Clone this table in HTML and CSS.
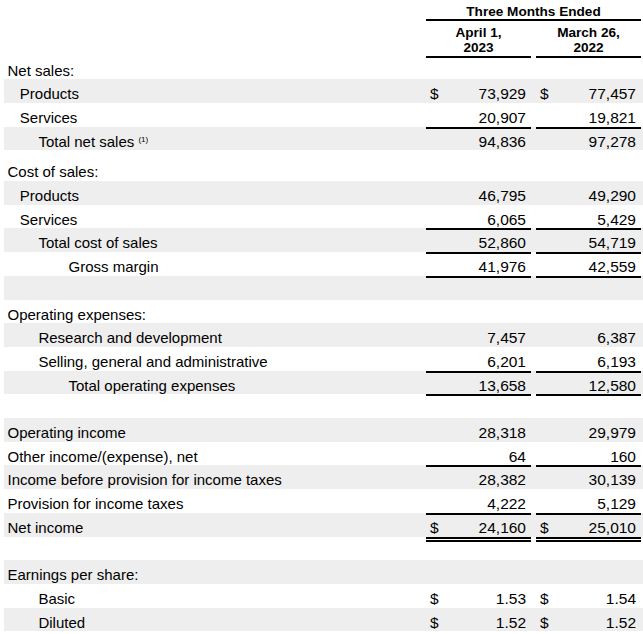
FILE: index.html
```html
<!DOCTYPE html>
<html lang="en">
<head>
<meta charset="utf-8">
<title>Condensed Consolidated Statements of Operations</title>
<link rel="stylesheet" href="styles.css">
</head>
<body>
<table class="stmt">
  <colgroup>
    <col class="c-label">
    <col class="c-per">
    <col class="c-sp">
    <col class="c-per">
    <col class="c-tail">
  </colgroup>
  <thead>
    <tr class="h1">
      <th></th>
      <th colspan="3" class="h-span">Three Months Ended</th>
      <th></th>
    </tr>
    <tr class="h2">
      <th></th>
      <th class="h-per"><div class="hl">April 1,</div><div class="hl">2023</div></th>
      <th></th>
      <th class="h-per"><div class="hl">March 26,</div><div class="hl">2022</div></th>
      <th></th>
    </tr>
  </thead>
  <tbody>
    <tr class="first">
      <td class="lbl l0">Net sales:</td><td></td><td></td><td></td><td></td>
    </tr>
    <tr class="sh">
      <td class="lbl l1">Products</td>
      <td class="amt"><div class="v"><span class="cur">$</span><span class="num">73,929</span></div></td>
      <td></td>
      <td class="amt"><div class="v"><span class="cur">$</span><span class="num">77,457</span></div></td>
      <td></td>
    </tr>
    <tr>
      <td class="lbl l1">Services</td>
      <td class="amt"><div class="v"><span class="num">20,907</span></div></td>
      <td></td>
      <td class="amt"><div class="v"><span class="num">19,821</span></div></td>
      <td></td>
    </tr>
    <tr class="sh">
      <td class="lbl l2">Total net sales <sup class="fn">(1)</sup></td>
      <td class="amt ol"><div class="v"><span class="num">94,836</span></div></td>
      <td></td>
      <td class="amt ol"><div class="v"><span class="num">97,278</span></div></td>
      <td></td>
    </tr>
    <tr class="gap"><td></td><td></td><td></td><td></td><td></td></tr>
    <tr>
      <td class="lbl l0">Cost of sales:</td><td></td><td></td><td></td><td></td>
    </tr>
    <tr class="sh">
      <td class="lbl l1">Products</td>
      <td class="amt"><div class="v"><span class="num">46,795</span></div></td>
      <td></td>
      <td class="amt"><div class="v"><span class="num">49,290</span></div></td>
      <td></td>
    </tr>
    <tr>
      <td class="lbl l1">Services</td>
      <td class="amt"><div class="v"><span class="num">6,065</span></div></td>
      <td></td>
      <td class="amt"><div class="v"><span class="num">5,429</span></div></td>
      <td></td>
    </tr>
    <tr class="sh">
      <td class="lbl l2">Total cost of sales</td>
      <td class="amt ol"><div class="v"><span class="num">52,860</span></div></td>
      <td></td>
      <td class="amt ol"><div class="v"><span class="num">54,719</span></div></td>
      <td></td>
    </tr>
    <tr>
      <td class="lbl l3">Gross margin</td>
      <td class="amt ol"><div class="v"><span class="num">41,976</span></div></td>
      <td></td>
      <td class="amt ol"><div class="v"><span class="num">42,559</span></div></td>
      <td></td>
    </tr>
    <tr class="sh">
      <td class="lbl"></td><td class="amt ol"></td><td></td><td class="amt ol"></td><td></td>
    </tr>
    <tr>
      <td class="lbl l0">Operating expenses:</td><td></td><td></td><td></td><td></td>
    </tr>
    <tr class="sh">
      <td class="lbl l2">Research and development</td>
      <td class="amt"><div class="v"><span class="num">7,457</span></div></td>
      <td></td>
      <td class="amt"><div class="v"><span class="num">6,387</span></div></td>
      <td></td>
    </tr>
    <tr>
      <td class="lbl l2">Selling, general and administrative</td>
      <td class="amt"><div class="v"><span class="num">6,201</span></div></td>
      <td></td>
      <td class="amt"><div class="v"><span class="num">6,193</span></div></td>
      <td></td>
    </tr>
    <tr class="sh">
      <td class="lbl l3">Total operating expenses</td>
      <td class="amt ol"><div class="v"><span class="num">13,658</span></div></td>
      <td></td>
      <td class="amt ol"><div class="v"><span class="num">12,580</span></div></td>
      <td></td>
    </tr>
    <tr>
      <td class="lbl"></td><td class="amt ol"></td><td></td><td class="amt ol"></td><td></td>
    </tr>
    <tr class="sh">
      <td class="lbl l0">Operating income</td>
      <td class="amt"><div class="v"><span class="num">28,318</span></div></td>
      <td></td>
      <td class="amt"><div class="v"><span class="num">29,979</span></div></td>
      <td></td>
    </tr>
    <tr>
      <td class="lbl l0">Other income/(expense), net</td>
      <td class="amt"><div class="v"><span class="num">64</span></div></td>
      <td></td>
      <td class="amt"><div class="v"><span class="num">160</span></div></td>
      <td></td>
    </tr>
    <tr class="sh">
      <td class="lbl l0">Income before provision for income taxes</td>
      <td class="amt ol"><div class="v"><span class="num">28,382</span></div></td>
      <td></td>
      <td class="amt ol"><div class="v"><span class="num">30,139</span></div></td>
      <td></td>
    </tr>
    <tr>
      <td class="lbl l0">Provision for income taxes</td>
      <td class="amt"><div class="v"><span class="num">4,222</span></div></td>
      <td></td>
      <td class="amt"><div class="v"><span class="num">5,129</span></div></td>
      <td></td>
    </tr>
    <tr class="sh">
      <td class="lbl l0">Net income</td>
      <td class="amt ol"><div class="v"><span class="cur">$</span><span class="num">24,160</span></div></td>
      <td></td>
      <td class="amt ol"><div class="v"><span class="cur">$</span><span class="num">25,010</span></div></td>
      <td></td>
    </tr>
    <tr>
      <td class="lbl"></td><td class="amt dbl"></td><td></td><td class="amt dbl"></td><td></td>
    </tr>
    <tr class="sh">
      <td class="lbl l0">Earnings per share:</td><td></td><td></td><td></td><td></td>
    </tr>
    <tr>
      <td class="lbl l2">Basic</td>
      <td class="amt"><div class="v"><span class="cur">$</span><span class="num">1.53</span></div></td>
      <td></td>
      <td class="amt"><div class="v"><span class="cur">$</span><span class="num">1.54</span></div></td>
      <td></td>
    </tr>
    <tr class="sh">
      <td class="lbl l2">Diluted</td>
      <td class="amt"><div class="v"><span class="cur">$</span><span class="num">1.52</span></div></td>
      <td></td>
      <td class="amt"><div class="v"><span class="cur">$</span><span class="num">1.52</span></div></td>
      <td></td>
    </tr>
  </tbody>
</table>
</body>
</html>
```
FILE: styles.css
```css
* {
  box-sizing: border-box;
}

body {
  margin: 0;
  background: #ffffff;
  color: #000000;
  font-family: "Liberation Sans", Arial, sans-serif;
}

.stmt {
  margin-left: 4px;
  width: 639px;
  table-layout: fixed;
  border-collapse: separate;
  border-spacing: 0;
}

.c-label { width: 422px; }
.c-per { width: 105px; }
.c-sp { width: 5px; }
.c-tail { width: 2px; }

.stmt th,
.stmt td {
  padding: 0;
}

/* ---------- header ---------- */
.stmt thead th {
  font-family: "Liberation Sans", Arial, sans-serif;
  font-weight: 700;
  font-size: 13.6px;
  line-height: 15.65px;
  text-align: center;
  vertical-align: top;
  color: #000;
}

.h1 th {
  height: 21px;
  padding: 3.5px 0 0;
}

.h2 th {
  height: 36px;
  padding: 3.5px 0 0;
}

.hl {
  line-height: 15.65px;
}

.h-span,
.h-per {
  border-bottom: 2px solid #000;
}

/* ---------- body rows ---------- */
.stmt tbody tr {
  height: 23.7px;
}

.stmt tbody tr.first {
  height: 21.3px;
}

.stmt tbody tr.gap {
  height: 7px;
}

.stmt tbody td {
  vertical-align: top;
  padding-top: 6px;
  font-size: 15px;
  line-height: 17.7px;
  white-space: nowrap;
}

.stmt tbody tr.first td {
  padding-top: 3.6px;
}

.stmt tbody tr.gap td {
  padding: 0;
  line-height: 0;
}

.sh {
  background: #eeeeee;
}

.l0 { padding-left: 3.5px !important; }
.l1 { padding-left: 15.8px !important; }
.l2 { padding-left: 34.4px !important; }
.l3 { padding-left: 64.5px !important; }

.fn {
  font-size: 8px;
  line-height: 0;
  vertical-align: 5px;
}

.stmt tbody td.amt {
  font-size: 15.5px;
  padding-left: 4px;
  padding-right: 5px;
}

.v {
  display: flex;
  justify-content: space-between;
}

.num {
  margin-left: auto;
}

.ol {
  box-shadow: inset 0 2px 0 #000;
}

.dbl {
  box-shadow: inset 0 2px 0 #000, inset 0 3px 0 #fff, inset 0 5px 0 #000;
}
```
